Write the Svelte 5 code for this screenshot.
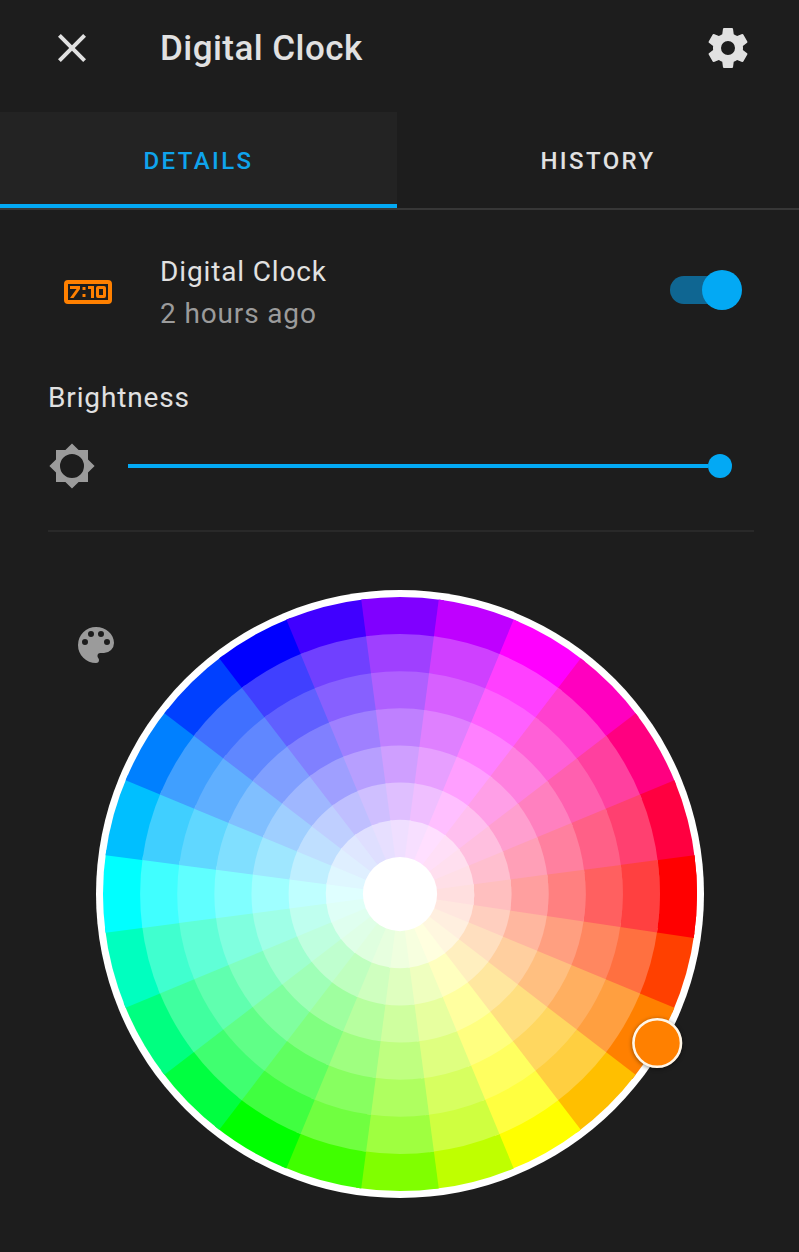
<script>
  const SECTORS = 24;
  const STEP = 360 / SECTORS;
  const RADIUS = 297;
  const RING = RADIUS / 8;
  const saturations = [1, 0.75, 0.625, 0.5, 0.375, 0.25, 0.125];

  const point = (radius, degrees) => {
    const a = (degrees * Math.PI) / 180;
    return `${(radius * Math.cos(a)).toFixed(3)} ${(radius * Math.sin(a)).toFixed(3)}`;
  };

  const shade = (hue, saturation) => {
    const channel = (n) => {
      const k = (n + hue / 60) % 6;
      return Math.round(255 * (1 - saturation * Math.max(0, Math.min(k, 4 - k, 1))));
    };
    return `rgb(${channel(5)}, ${channel(3)}, ${channel(1)})`;
  };

  // Rings are painted from the rim inwards. Each sector runs one degree over its
  // neighbour so no seam shows, and hue 0 is painted again at 360 to close the ring.
  const segments = saturations.flatMap((saturation, ring) => {
    const r = RADIUS - ring * RING;
    return Array.from({ length: SECTORS + 1 }, (_, i) => {
      const hue = i * STEP;
      return {
        fill: shade(hue, saturation),
        d: `M0 0L${point(r, hue - STEP / 2)}A${r} ${r} 0 0 1 ${point(r, hue + STEP / 2 + 1)}Z`
      };
    });
  });

  const hue = 30;
  const markerX = RADIUS * Math.cos((hue * Math.PI) / 180);
  const markerY = RADIUS * Math.sin((hue * Math.PI) / 180) + 0.5;

  const icons = {
    close: 'M19,6.41L17.59,5L12,10.59L6.41,5L5,6.41L10.59,12L5,17.59L6.41,19L12,13.41L17.59,19L19,17.59L13.41,12L19,6.41Z',
    cog: 'M12,15.5A3.5,3.5 0 0,1 8.5,12A3.5,3.5 0 0,1 12,8.5A3.5,3.5 0 0,1 15.5,12A3.5,3.5 0 0,1 12,15.5M19.43,12.97C19.47,12.65 19.5,12.33 19.5,12C19.5,11.67 19.47,11.34 19.43,11L21.54,9.37C21.73,9.22 21.78,8.95 21.66,8.73L19.66,5.27C19.54,5.05 19.27,4.96 19.05,5.05L16.56,6.05C16.04,5.66 15.5,5.32 14.87,5.07L14.5,2.42C14.46,2.18 14.25,2 14,2H10C9.75,2 9.54,2.18 9.5,2.42L9.13,5.07C8.5,5.32 7.96,5.66 7.44,6.05L4.95,5.05C4.73,4.96 4.46,5.05 4.34,5.27L2.34,8.73C2.21,8.95 2.27,9.22 2.46,9.37L4.57,11C4.53,11.34 4.5,11.67 4.5,12C4.5,12.33 4.53,12.65 4.57,12.97L2.46,14.63C2.27,14.78 2.21,15.05 2.34,15.27L4.34,18.73C4.46,18.95 4.73,19.03 4.95,18.95L7.44,17.94C7.96,18.34 8.5,18.68 9.13,18.93L9.5,21.58C9.54,21.82 9.75,22 10,22H14C14.25,22 14.46,21.82 14.5,21.58L14.87,18.93C15.5,18.67 16.04,18.34 16.56,17.94L19.05,18.95C19.27,19.03 19.54,18.95 19.66,18.73L21.66,15.27C21.78,15.05 21.73,14.78 21.54,14.63L19.43,12.97Z',
    clock: 'M2,6A2,2 0 0,0 0,8V16A2,2 0 0,0 2,18H22A2,2 0 0,0 24,16V8A2,2 0 0,0 22,6H2M2,8H22V16H2V8M3,9V10.5H6.25L3,15H4.75L8,10.5V9H3M9.25,9.5V11H10.75V9.5H9.25M12,9V10.5H13.5V15H15V9H12M17,9A1,1 0 0,0 16,10V14A1,1 0 0,0 17,15H20A1,1 0 0,0 21,14V10A1,1 0 0,0 20,9H17M17.5,10.5H19.5V13.5H17.5V10.5M9.25,13V14.5H10.75V13H9.25Z',
    brightness: 'M12,18A6,6 0 0,1 6,12A6,6 0 0,1 12,6A6,6 0 0,1 18,12A6,6 0 0,1 12,18M20,15.31L23.31,12L20,8.69V4H15.31L12,0.69L8.69,4H4V8.69L0.69,12L4,15.31V20H8.69L12,23.31L15.31,20H20V15.31Z',
    palette: 'M17.5,12A1.5,1.5 0 0,1 16,10.5A1.5,1.5 0 0,1 17.5,9A1.5,1.5 0 0,1 19,10.5A1.5,1.5 0 0,1 17.5,12M14.5,8A1.5,1.5 0 0,1 13,6.5A1.5,1.5 0 0,1 14.5,5A1.5,1.5 0 0,1 16,6.5A1.5,1.5 0 0,1 14.5,8M9.5,8A1.5,1.5 0 0,1 8,6.5A1.5,1.5 0 0,1 9.5,5A1.5,1.5 0 0,1 11,6.5A1.5,1.5 0 0,1 9.5,8M6.5,12A1.5,1.5 0 0,1 5,10.5A1.5,1.5 0 0,1 6.5,9A1.5,1.5 0 0,1 8,10.5A1.5,1.5 0 0,1 6.5,12M12,3A9,9 0 0,0 3,12A9,9 0 0,0 12,21A1.5,1.5 0 0,0 13.5,19.5C13.5,19.11 13.35,18.76 13.11,18.5C12.88,18.23 12.73,17.88 12.73,17.5A1.5,1.5 0 0,1 14.23,16H16A5,5 0 0,0 21,11C21,6.58 16.97,3 12,3Z'
  };
</script>

{#snippet icon(path)}
  <svg class="icon" viewBox="0 0 24 24" aria-hidden="true"><path d={path} /></svg>
{/snippet}

<main class="dialog">
  <header>
    <button>{@render icon(icons.close)}</button>
    <h1>Digital Clock</h1>
    <button>{@render icon(icons.cog)}</button>
  </header>

  <nav>
    <button class="tab active">DETAILS</button>
    <button class="tab">HISTORY</button>
  </nav>

  <section class="entity">
    <span class="state-icon">{@render icon(icons.clock)}</span>
    <div class="info">
      <div>Digital Clock</div>
      <div class="secondary">2 hours ago</div>
    </div>
    <div class="switch"><span class="thumb"></span></div>
  </section>

  <section class="brightness">
    <div class="label">Brightness</div>
    <div class="slider-row">
      {@render icon(icons.brightness)}
      <div class="slider"><span class="track"></span><span class="knob"></span></div>
    </div>
  </section>

  <section class="color">
    <span class="palette">{@render icon(icons.palette)}</span>
    <svg class="wheel" viewBox="-304 -304 608 608">
      <circle r="304" fill="#fff" />
      {#each segments as s}
        <path d={s.d} fill={s.fill} />
      {/each}
      <circle r={RING} fill="#fff" />
      <circle class="marker" cx={markerX} cy={markerY} r="23.8" />
    </svg>
  </section>
</main>

<style>
  :global(body) {
    background: #1d1d1d;
  }
  .dialog {
    width: 799px;
    height: 1252px;
    overflow: hidden;
    box-sizing: border-box;
    background: #1d1d1d;
    color: #e1e1e1;
    font-family: Roboto, sans-serif;
    font-size: 28px;
    letter-spacing: 0.86px;
  }
  button {
    display: flex;
    padding: 0;
    border: 0;
    background: none;
    color: inherit;
    font: inherit;
  }
  .icon {
    display: block;
    flex: none;
    width: 48px;
    height: 48px;
    fill: currentColor;
  }
  header {
    display: flex;
    align-items: center;
    height: 112px;
    padding: 0 47px 16px 48px;
    box-sizing: border-box;
  }
  h1 {
    flex: 1;
    margin: 0 0 0 64px;
    padding-top: 1px;
    font-size: 35px;
    font-weight: 500;
    line-height: 47px;
    letter-spacing: 0.45px;
  }
  nav {
    display: flex;
    height: 98px;
    box-sizing: border-box;
    border-bottom: 2px solid #373737;
  }
  .tab {
    flex: 1;
    align-items: center;
    justify-content: center;
    padding-top: 5px;
    font-size: 24px;
    font-weight: 500;
    letter-spacing: 2.4px;
    box-sizing: border-box;
    border-bottom: 4px solid transparent;
  }
  .tab.active {
    flex: 0 0 397px;
    background: #232323;
    border-color: #03a9f4;
    color: #0fa4ec;
  }
  .entity {
    display: flex;
    align-items: center;
    height: 84px;
    padding: 40px 57px 0 64px;
  }
  .state-icon {
    color: #ff8000;
  }
  .info {
    flex: 1;
    margin-left: 48px;
    padding-top: 2px;
    line-height: 42px;
  }
  .secondary {
    color: #9b9b9b;
  }
  .switch {
    display: flex;
    align-items: center;
    justify-content: flex-end;
    width: 72px;
    height: 28px;
    margin-bottom: 4px;
    border-radius: 14px;
    background: linear-gradient(#0f6692, #0f6692) 0 0 / 60px 28px no-repeat;
  }
  .thumb {
    width: 40px;
    height: 40px;
    border-radius: 50%;
    background: #03a9f4;
  }
  .brightness {
    margin: 42px 45px 0 48px;
    height: 154px;
    border-bottom: 2px solid #292929;
  }
  .label {
    padding-top: 1px;
    line-height: 42px;
  }
  .slider-row {
    display: flex;
    align-items: center;
    margin-top: 23px;
    color: #9b9b9b;
  }
  .slider {
    display: flex;
    align-items: center;
    margin-left: 32px;
    width: 604px;
  }
  .track {
    flex: 1;
    height: 4px;
    background: #03a9f4;
  }
  .knob {
    width: 24px;
    height: 24px;
    border-radius: 50%;
    background: #03a9f4;
  }
  .color {
    display: grid;
    padding: 58px 0 0 72px;
  }
  .palette,
  .wheel {
    grid-area: 1 / 1;
  }
  .palette {
    margin-top: 31px;
    color: #9b9b9b;
  }
  .wheel {
    width: 608px;
    height: 608px;
    margin-left: 24px;
    overflow: visible;
  }
  .marker {
    fill: #ff8000;
    stroke: #fff6e8;
    stroke-width: 2.6;
    filter: drop-shadow(0 1px 2px rgb(0 0 0 / 0.45));
  }
</style>
